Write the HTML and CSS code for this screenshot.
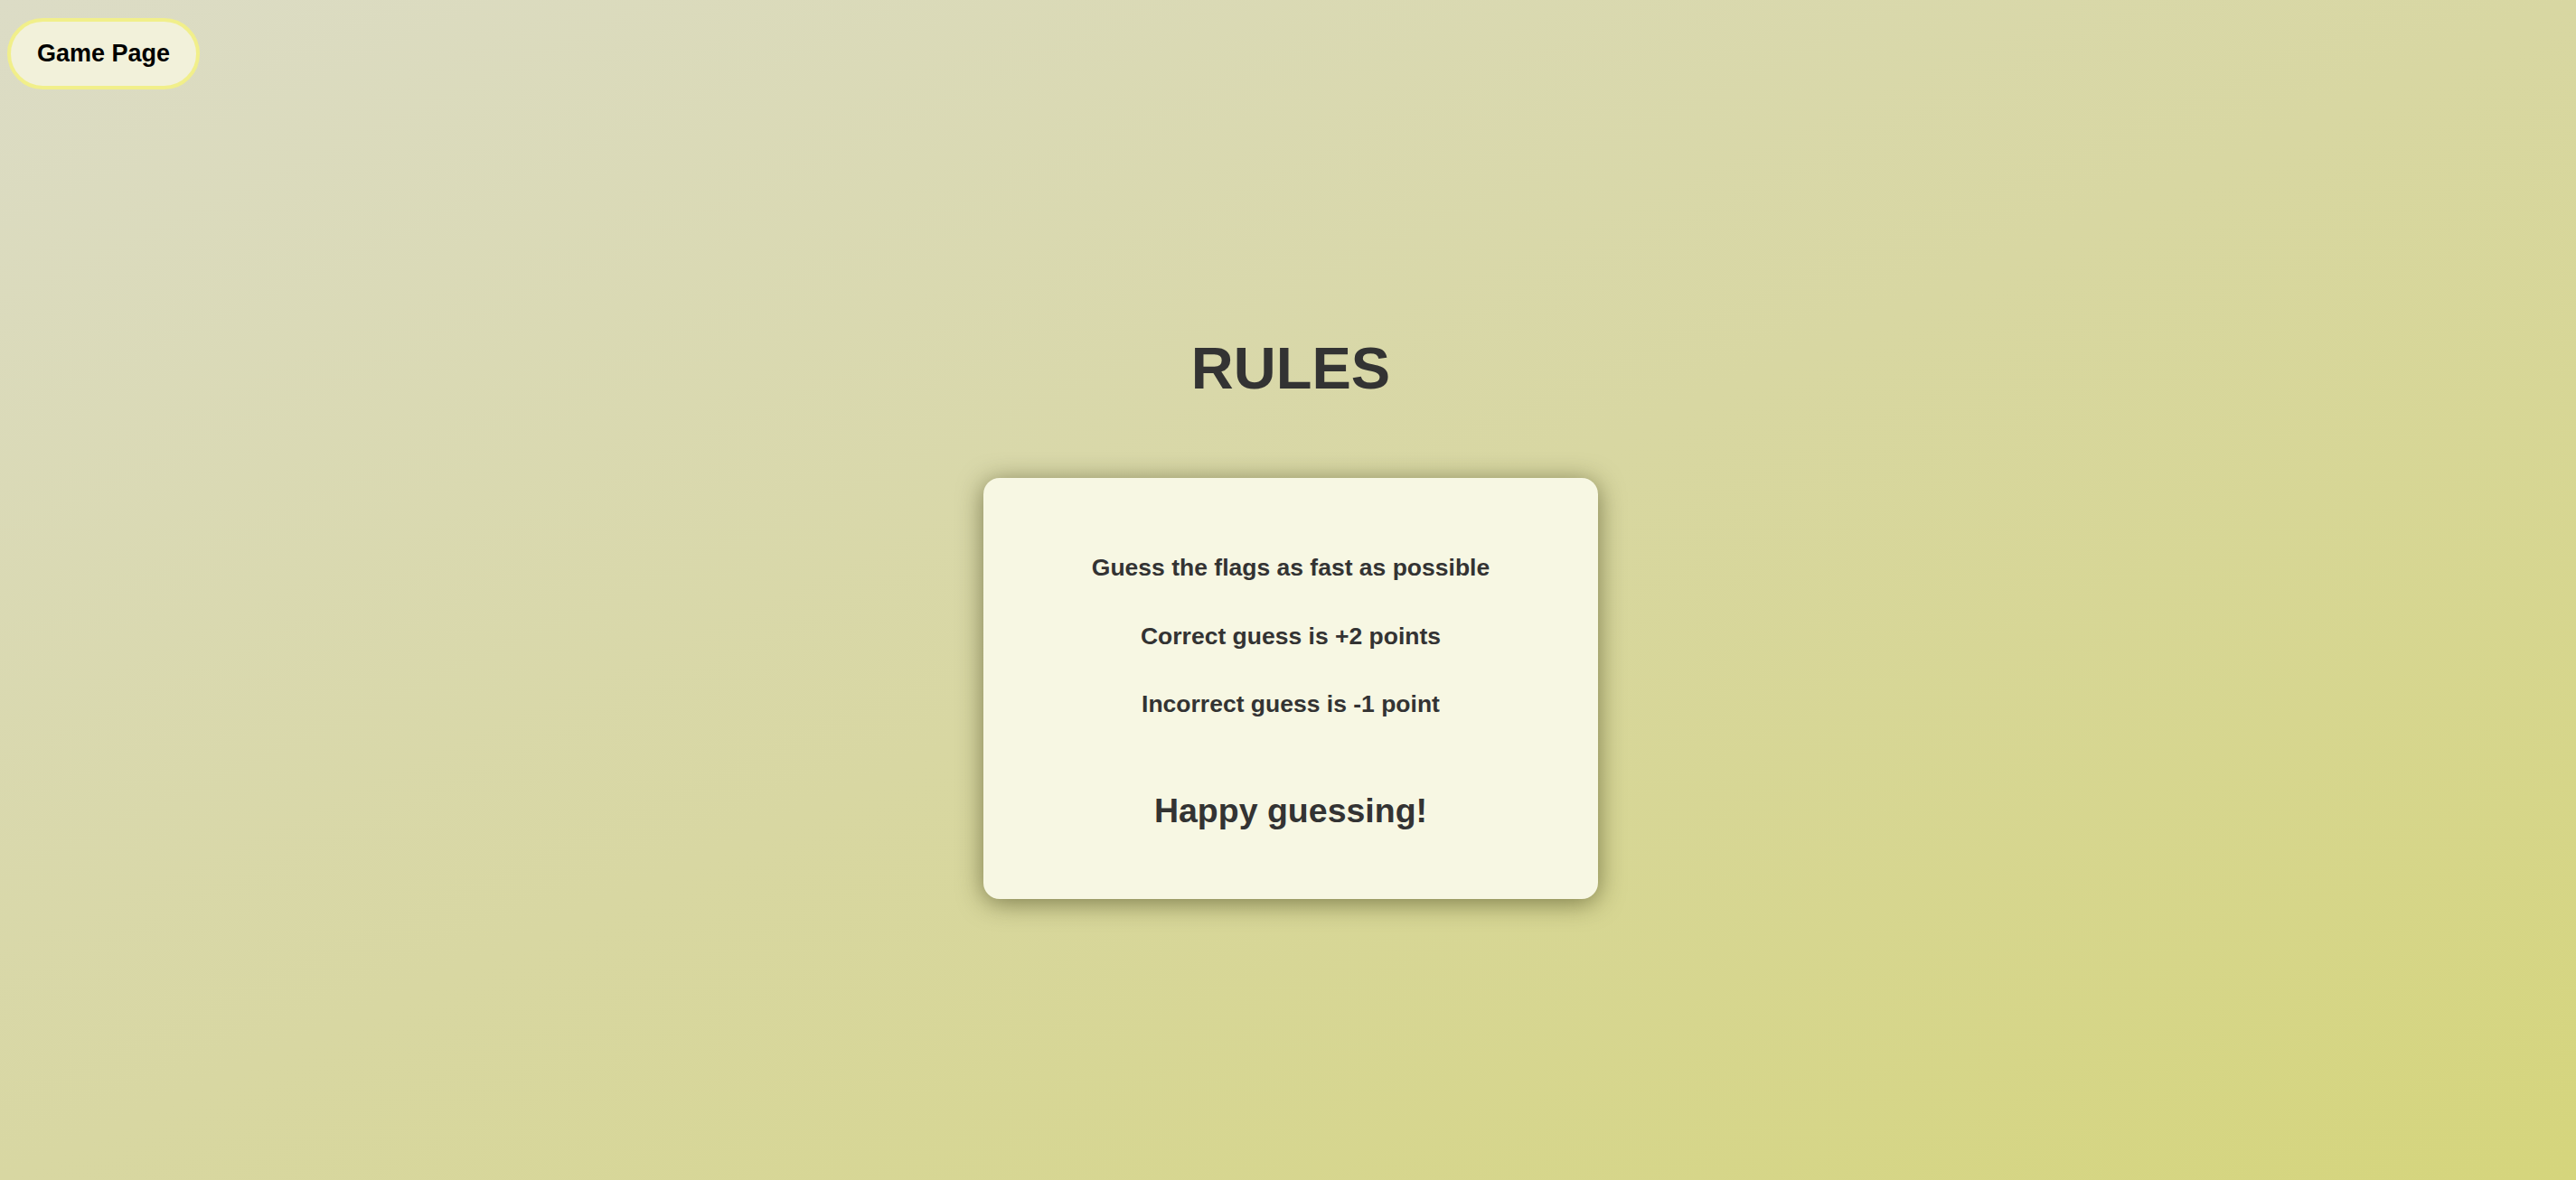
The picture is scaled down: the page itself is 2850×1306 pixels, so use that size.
FILE: index.html
```html
<!DOCTYPE html>
<html lang="en">
<head>
<meta charset="utf-8">
<title>Rules</title>
<link rel="stylesheet" href="styles.css">
</head>
<body>
<header class="top">
  <button class="nav-btn" type="button">Game Page</button>
</header>
<main class="rules">
  <h1 class="rules-title">RULES</h1>
  <section class="rules-card">
    <p class="rule">Guess the flags as fast as possible</p>
    <p class="rule">Correct guess is +2 points</p>
    <p class="rule">Incorrect guess is -1 point</p>
    <p class="closing">Happy guessing!</p>
  </section>
</main>
</body>
</html>
```

FILE: styles.css
```css
html, body {
  margin: 0;
  padding: 0;
  height: 100%;
}
body {
  font-family: "Liberation Sans", Arial, sans-serif;
  background: linear-gradient(to bottom right, #dcdcc6 0%, #d8d7a2 50%, #d5d57c 100%);
  color: #333;
  overflow: hidden;
}
.top {
  padding: 20px 0 0 8px;
  height: 79px;
}
.nav-btn {
  font-family: "Liberation Sans", Arial, sans-serif;
  font-weight: bold;
  font-size: 27px;
  color: #000;
  background: #f2f1da;
  border: 4px solid #f1ef8a;
  border-radius: 40px;
  height: 79px;
  width: 213px;
  padding: 0;
  cursor: pointer;
}
.rules {
  display: flex;
  flex-direction: column;
  align-items: center;
  padding-top: 272px;
  padding-left: 6px;
}
.rules-title {
  margin: 0;
  font-size: 65px;
  line-height: 73px;
  font-weight: bold;
  color: #333;
}
.rules-card {
  margin-top: 85px;
  width: 680px;
  box-sizing: border-box;
  padding: 85px 20px 77px;
  background: #f7f7e3;
  border-radius: 18px;
  box-shadow: 0 4px 28px rgba(60, 60, 20, 0.6);
  display: flex;
  flex-direction: column;
  align-items: center;
  text-align: center;
}
.rule {
  margin: 0 0 46px;
  font-size: 26.5px;
  line-height: 29.6px;
  font-weight: bold;
  color: #333;
}
.rule:nth-child(3) {
  margin-bottom: 81px;
}
.closing {
  margin: 0;
  font-size: 37.5px;
  line-height: 42px;
  font-weight: bold;
  color: #333;
}
```
